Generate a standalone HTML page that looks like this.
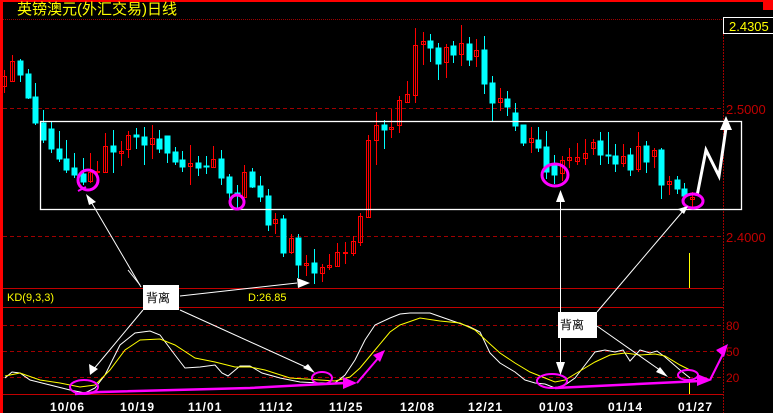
<!DOCTYPE html>
<html><head><meta charset="utf-8"><style>
html,body{margin:0;padding:0;background:#000;width:773px;height:413px;overflow:hidden}
svg{display:block}
text{font-family:"Liberation Sans","Noto Sans CJK SC",sans-serif}
</style></head><body>
<svg width="773" height="413" viewBox="0 0 773 413" xmlns="http://www.w3.org/2000/svg">
<rect x="0" y="0" width="773" height="413" fill="#000"/>
<rect x="0" y="0" width="773" height="2" fill="#f00"/>
<rect x="763" y="0" width="10" height="10" fill="#f00"/>
<rect x="0" y="0" width="3" height="413" fill="#f00"/>
<text x="17" y="14" fill="#ffff00" font-size="15" font-family="'WenQuanYi Zen Hei','Noto Sans CJK SC',sans-serif">英镑澳元(外汇交易)日线</text>
<g stroke="#a00000" stroke-width="1" fill="none" shape-rendering="crispEdges">
<line x1="3" y1="19.5" x2="723" y2="19.5" stroke-dasharray="1,1"/>
<line x1="3" y1="108.5" x2="723" y2="108.5" stroke-dasharray="4,3"/>
<line x1="3" y1="236.5" x2="723" y2="236.5" stroke-dasharray="4,3"/>
<line x1="3" y1="288.5" x2="723" y2="288.5" stroke="#c00000"/>
<line x1="3" y1="307.5" x2="723" y2="307.5" stroke="#c00000"/>
<line x1="3" y1="325.5" x2="723" y2="325.5" stroke-dasharray="4,3"/>
<line x1="3" y1="351.5" x2="723" y2="351.5" stroke-dasharray="4,3"/>
<line x1="3" y1="377.5" x2="723" y2="377.5" stroke-dasharray="4,3"/>
<line x1="3" y1="394.5" x2="723" y2="394.5" stroke="#c00000"/>
<line x1="723.5" y1="19" x2="723.5" y2="413" stroke-dasharray="2,1"/>
</g>
<rect x="723.5" y="17.5" width="50" height="16" fill="#000" stroke="#fff"/>
<text x="729" y="31" fill="#ffff00" font-size="13">2.4305</text>
<text x="726" y="114" fill="#c00000" font-size="13">2.5000</text>
<text x="726" y="242" fill="#c00000" font-size="13">2.4000</text>
<text x="726" y="330" fill="#c00000" font-size="12">80</text>
<text x="726" y="356" fill="#c00000" font-size="12">50</text>
<text x="726" y="382" fill="#c00000" font-size="12">20</text>
<text x="7" y="301" fill="#ffff00" font-size="11">KD(9,3,3)</text>
<text x="248" y="301" fill="#ffff00" font-size="11">D:26.85</text>
<g stroke-width="1" shape-rendering="crispEdges">
<g stroke="#f00" fill="none">
<line x1="4.5" y1="70" x2="4.5" y2="93"/><rect x="2.5" y="76.5" width="4" height="10"/>
<line x1="12.5" y1="55" x2="12.5" y2="82"/><rect x="10.5" y="61.5" width="4" height="20"/>
<line x1="90.5" y1="153" x2="90.5" y2="183"/><rect x="88.5" y="172.5" width="4" height="9"/>
<line x1="97.5" y1="161" x2="97.5" y2="175"/><rect x="95.5" y="171.5" width="4" height="1"/>
<line x1="105.5" y1="133" x2="105.5" y2="173"/><rect x="103.5" y="146.5" width="4" height="26"/>
<line x1="121.5" y1="141" x2="121.5" y2="166"/><rect x="119.5" y="151.5" width="4" height="2"/>
<line x1="128.5" y1="131" x2="128.5" y2="158"/><rect x="126.5" y="135.5" width="4" height="14"/>
<line x1="152.5" y1="125" x2="152.5" y2="159"/><rect x="150.5" y="138.5" width="4" height="6"/>
<line x1="190.5" y1="145" x2="190.5" y2="185"/><rect x="188.5" y="163.5" width="4" height="3"/>
<line x1="213.5" y1="146" x2="213.5" y2="168"/><rect x="211.5" y="159.5" width="4" height="8"/>
<line x1="244.5" y1="165" x2="244.5" y2="198"/><rect x="242.5" y="172.5" width="4" height="25"/>
<line x1="275.5" y1="213" x2="275.5" y2="234"/><rect x="273.5" y="219.5" width="4" height="4"/>
<line x1="291.5" y1="234" x2="291.5" y2="254"/><rect x="289.5" y="238.5" width="4" height="14"/>
<line x1="306.5" y1="255" x2="306.5" y2="276"/><rect x="304.5" y="263.5" width="4" height="2"/>
<line x1="322.5" y1="264" x2="322.5" y2="282"/><rect x="320.5" y="267.5" width="4" height="6"/>
<line x1="329.5" y1="254" x2="329.5" y2="270"/><rect x="327.5" y="265.5" width="4" height="2"/>
<line x1="337.5" y1="243" x2="337.5" y2="267"/><rect x="335.5" y="252.5" width="4" height="14"/>
<line x1="345.5" y1="242" x2="345.5" y2="264"/><rect x="343.5" y="252.5" width="4" height="1"/>
<line x1="353.5" y1="236" x2="353.5" y2="256"/><rect x="351.5" y="241.5" width="4" height="12"/>
<line x1="360.5" y1="213" x2="360.5" y2="246"/><rect x="358.5" y="216.5" width="4" height="26"/>
<line x1="368.5" y1="135" x2="368.5" y2="218"/><rect x="366.5" y="140.5" width="4" height="77"/>
<line x1="376.5" y1="112" x2="376.5" y2="165"/><rect x="374.5" y="125.5" width="4" height="15"/>
<line x1="391.5" y1="109" x2="391.5" y2="138"/><rect x="389.5" y="127.5" width="4" height="2"/>
<line x1="399.5" y1="96" x2="399.5" y2="133"/><rect x="397.5" y="100.5" width="4" height="25"/>
<line x1="407.5" y1="81" x2="407.5" y2="103"/><rect x="405.5" y="94.5" width="4" height="8"/>
<line x1="415.5" y1="28" x2="415.5" y2="103"/><rect x="413.5" y="45.5" width="4" height="50"/>
<line x1="423.5" y1="32" x2="423.5" y2="65"/><rect x="421.5" y="41.5" width="4" height="3"/>
<line x1="446.5" y1="44" x2="446.5" y2="78"/><rect x="444.5" y="47.5" width="4" height="15"/>
<line x1="461.5" y1="25" x2="461.5" y2="66"/><rect x="459.5" y="43.5" width="4" height="11"/>
<line x1="476.5" y1="39" x2="476.5" y2="67"/><rect x="474.5" y="50.5" width="4" height="6"/>
<line x1="500.5" y1="88" x2="500.5" y2="111"/><rect x="498.5" y="98.5" width="4" height="4"/>
<line x1="531.5" y1="127" x2="531.5" y2="153"/><rect x="529.5" y="138.5" width="4" height="4"/>
<line x1="562.5" y1="156" x2="562.5" y2="181"/><rect x="560.5" y="160.5" width="4" height="13"/>
<line x1="569.5" y1="148" x2="569.5" y2="168"/><rect x="567.5" y="157.5" width="4" height="3"/>
<line x1="577.5" y1="143" x2="577.5" y2="165"/><rect x="575.5" y="157.5" width="4" height="4"/>
<line x1="585.5" y1="139" x2="585.5" y2="165"/><rect x="583.5" y="153.5" width="4" height="5"/>
<line x1="593.5" y1="139" x2="593.5" y2="155"/><rect x="591.5" y="142.5" width="4" height="6"/>
<line x1="623.5" y1="144" x2="623.5" y2="167"/><rect x="621.5" y="156.5" width="4" height="7"/>
<line x1="638.5" y1="132" x2="638.5" y2="172"/><rect x="636.5" y="146.5" width="4" height="23"/>
<line x1="654.5" y1="148" x2="654.5" y2="168"/><rect x="652.5" y="150.5" width="4" height="6"/>
<line x1="669.5" y1="176" x2="669.5" y2="195"/><rect x="667.5" y="181.5" width="4" height="3"/>
<line x1="692.5" y1="192" x2="692.5" y2="207"/><rect x="690.5" y="197.5" width="4" height="2"/>
</g>
<g stroke="#00ffff" fill="#00ffff">
<line x1="20.5" y1="59" x2="20.5" y2="82"/><rect x="18" y="61" width="5" height="14"/>
<line x1="28.5" y1="69" x2="28.5" y2="99"/><rect x="26" y="74" width="5" height="24"/>
<line x1="35.5" y1="83" x2="35.5" y2="125"/><rect x="33" y="97" width="5" height="26"/>
<line x1="43.5" y1="110" x2="43.5" y2="143"/><rect x="41" y="123" width="5" height="17"/>
<line x1="51.5" y1="122" x2="51.5" y2="153"/><rect x="49" y="129" width="5" height="20"/>
<line x1="59.5" y1="131" x2="59.5" y2="162"/><rect x="57" y="149" width="5" height="10"/>
<line x1="66.5" y1="140" x2="66.5" y2="173"/><rect x="64" y="159" width="5" height="11"/>
<line x1="74.5" y1="153" x2="74.5" y2="178"/><rect x="72" y="168" width="5" height="7"/>
<line x1="83.5" y1="158" x2="83.5" y2="185"/><rect x="81" y="174" width="5" height="8"/>
<line x1="113.5" y1="130" x2="113.5" y2="173"/><rect x="111" y="146" width="5" height="6"/>
<line x1="136.5" y1="128" x2="136.5" y2="149"/><rect x="134" y="135" width="5" height="2"/>
<line x1="144.5" y1="127" x2="144.5" y2="165"/><rect x="142" y="137" width="5" height="8"/>
<line x1="159.5" y1="130" x2="159.5" y2="153"/><rect x="157" y="139" width="5" height="10"/>
<line x1="167.5" y1="136" x2="167.5" y2="163"/><rect x="165" y="136" width="5" height="17"/>
<line x1="175.5" y1="147" x2="175.5" y2="165"/><rect x="173" y="152" width="5" height="10"/>
<line x1="182.5" y1="151" x2="182.5" y2="172"/><rect x="180" y="160" width="5" height="7"/>
<line x1="198.5" y1="156" x2="198.5" y2="176"/><rect x="196" y="163" width="5" height="5"/>
<line x1="206.5" y1="156" x2="206.5" y2="174"/><rect x="204" y="166" width="5" height="1"/>
<line x1="221.5" y1="150" x2="221.5" y2="185"/><rect x="219" y="159" width="5" height="19"/>
<line x1="229.5" y1="174" x2="229.5" y2="200"/><rect x="227" y="177" width="5" height="16"/>
<line x1="237.5" y1="185" x2="237.5" y2="208"/><rect x="235" y="193" width="5" height="3"/>
<line x1="252.5" y1="168" x2="252.5" y2="188"/><rect x="250" y="172" width="5" height="15"/>
<line x1="260.5" y1="176" x2="260.5" y2="202"/><rect x="258" y="186" width="5" height="11"/>
<line x1="268.5" y1="189" x2="268.5" y2="231"/><rect x="266" y="196" width="5" height="29"/>
<line x1="283.5" y1="215" x2="283.5" y2="257"/><rect x="281" y="219" width="5" height="34"/>
<line x1="298.5" y1="234" x2="298.5" y2="278"/><rect x="296" y="238" width="5" height="27"/>
<line x1="314.5" y1="249" x2="314.5" y2="284"/><rect x="312" y="263" width="5" height="10"/>
<line x1="384.5" y1="120" x2="384.5" y2="149"/><rect x="382" y="125" width="5" height="5"/>
<line x1="430.5" y1="34" x2="430.5" y2="62"/><rect x="428" y="41" width="5" height="7"/>
<line x1="438.5" y1="43" x2="438.5" y2="80"/><rect x="436" y="48" width="5" height="16"/>
<line x1="453.5" y1="41" x2="453.5" y2="63"/><rect x="451" y="46" width="5" height="9"/>
<line x1="469.5" y1="37" x2="469.5" y2="66"/><rect x="467" y="44" width="5" height="16"/>
<line x1="484.5" y1="36" x2="484.5" y2="94"/><rect x="482" y="50" width="5" height="34"/>
<line x1="492.5" y1="76" x2="492.5" y2="121"/><rect x="490" y="83" width="5" height="20"/>
<line x1="507.5" y1="91" x2="507.5" y2="116"/><rect x="505" y="99" width="5" height="8"/>
<line x1="515.5" y1="103" x2="515.5" y2="131"/><rect x="513" y="113" width="5" height="13"/>
<line x1="523.5" y1="125" x2="523.5" y2="146"/><rect x="521" y="125" width="5" height="18"/>
<line x1="538.5" y1="127" x2="538.5" y2="152"/><rect x="536" y="140" width="5" height="8"/>
<line x1="546.5" y1="131" x2="546.5" y2="179"/><rect x="544" y="147" width="5" height="25"/>
<line x1="554.5" y1="155" x2="554.5" y2="184"/><rect x="552" y="165" width="5" height="10"/>
<line x1="600.5" y1="132" x2="600.5" y2="165"/><rect x="598" y="141" width="5" height="14"/>
<line x1="608.5" y1="132" x2="608.5" y2="164"/><rect x="606" y="155" width="5" height="1"/>
<line x1="615.5" y1="144" x2="615.5" y2="172"/><rect x="613" y="156" width="5" height="8"/>
<line x1="630.5" y1="148" x2="630.5" y2="176"/><rect x="628" y="155" width="5" height="15"/>
<line x1="646.5" y1="141" x2="646.5" y2="173"/><rect x="644" y="146" width="5" height="16"/>
<line x1="661.5" y1="148" x2="661.5" y2="199"/><rect x="659" y="150" width="5" height="35"/>
<line x1="677.5" y1="176" x2="677.5" y2="194"/><rect x="675" y="180" width="5" height="9"/>
<line x1="684.5" y1="183" x2="684.5" y2="199"/><rect x="682" y="189" width="5" height="7"/>
</g>
</g>
<rect x="40.5" y="121.5" width="701" height="88" fill="none" stroke="#fff" stroke-width="1.3"/>
<polyline points="697,196 706,150 719,176 726,128" fill="none" stroke="#fff" stroke-width="3"/>
<polygon points="726,116 720,130 732,130" fill="#fff"/>
<line x1="689.5" y1="253" x2="689.5" y2="288" stroke="#ffff00"/>
<line x1="689.5" y1="380" x2="689.5" y2="394" stroke="#ffff00"/>
<polyline fill="none" stroke="#fff" stroke-width="1" points="5,378 12,372 20,373 30,380 50,385 70,390 85,393 95,388 105,375 120,345 135,333 150,331 160,335 175,355 185,368 200,367 215,365 222,373 228,376 240,366 250,366 262,373 280,378 300,382 320,383 335,383 345,375 355,360 365,340 375,325 390,318 400,314 410,313 430,313 450,320 470,327 480,332 490,353 500,363 515,372 525,380 535,383 545,384 555,388 565,385 575,378 585,365 595,352 605,350 615,352 623,350 630,361 640,350 650,353 657,351 665,357 680,370 690,378"/>
<polyline fill="none" stroke="#ffff00" stroke-width="1" points="5,376 20,373 40,380 60,383 80,387 95,385 110,370 125,350 140,340 160,339 175,345 195,358 215,362 235,367 250,367 265,370 290,378 320,380 335,381 350,377 360,368 375,350 390,332 400,325 420,318 440,321 460,323 475,330 490,344 500,353 515,363 530,372 545,378 555,382 565,380 580,371 595,362 610,355 625,353 640,355 655,354 665,356 680,365 690,370"/>
<g stroke="#ff00ff" fill="none" stroke-width="3">
<ellipse cx="88" cy="180" rx="10" ry="10"/>
<ellipse cx="237" cy="202" rx="7" ry="7"/>
<ellipse cx="555" cy="175" rx="13" ry="11"/>
<ellipse cx="693" cy="201" rx="10" ry="7"/>
<ellipse cx="84" cy="387" rx="14" ry="7" stroke-width="2"/>
<ellipse cx="322" cy="378" rx="10" ry="6" stroke-width="2"/>
<ellipse cx="552" cy="381" rx="15" ry="7" stroke-width="2"/>
<ellipse cx="688" cy="375" rx="10" ry="5" stroke-width="2"/>
<polyline points="75,394 100,392 250,388 305,385 345,383" stroke-width="2.5"/>
<line x1="357" y1="383" x2="380" y2="356" stroke-width="2"/>
<polyline points="555,388 700,381" stroke-width="2.5"/>
<line x1="710" y1="380" x2="724" y2="352" stroke-width="2"/>
<line x1="78" y1="191" x2="86" y2="187" stroke-width="2"/>
</g>
<g fill="#ff00ff">
<polygon points="343,377 357,383 343,389"/>
<polygon points="385,350 373,355 380,362"/>
<polygon points="697,374 712,380 697,386"/>
<polygon points="728,344 716,350 724,357"/>
</g>
<g stroke="#fff" stroke-width="1" fill="none">
<line x1="141" y1="287" x2="90" y2="200"/>
<line x1="128" y1="270" x2="140" y2="285"/>
<line x1="143" y1="310" x2="93" y2="370"/>
<line x1="180" y1="296" x2="297" y2="283"/>
<line x1="180" y1="310" x2="310" y2="369"/>
<line x1="560.5" y1="198" x2="560.5" y2="368"/>
<line x1="597" y1="312" x2="683" y2="211"/>
<line x1="597" y1="326" x2="664" y2="373"/>
</g>
<g fill="#fff">
<polygon points="86,194 96,202 89,205"/>
<polygon points="90,375 89,364 98,369"/>
<polygon points="310,283 297,278 298,288"/>
<polygon points="315,373 303,368 308,364"/>
<polygon points="560.5,190 556,202 565,202"/>
<polygon points="560.5,375 556,362 565,362"/>
<polygon points="688,206 678,209 684,214"/>
<polygon points="668,377 660,367 656,372"/>
</g>
<rect x="143" y="285" width="36" height="25" fill="#fff"/>
<text x="146" y="302" fill="#000" font-size="12" font-family="'WenQuanYi Zen Hei','Noto Sans CJK SC',sans-serif">背离</text>
<rect x="558" y="312" width="39" height="26" fill="#fff"/>
<text x="560" y="329" fill="#000" font-size="12" font-family="'WenQuanYi Zen Hei','Noto Sans CJK SC',sans-serif">背离</text>
<g fill="#fff" font-size="12" font-weight="bold" letter-spacing="1">
<text x="50" y="411">10/06</text>
<text x="120" y="411">10/19</text>
<text x="188" y="411">11/01</text>
<text x="259" y="411">11/12</text>
<text x="329" y="411">11/25</text>
<text x="400" y="411">12/08</text>
<text x="468" y="411">12/21</text>
<text x="539" y="411">01/03</text>
<text x="608" y="411">01/14</text>
<text x="678" y="411">01/27</text>
</g>
</svg>
</body></html>
